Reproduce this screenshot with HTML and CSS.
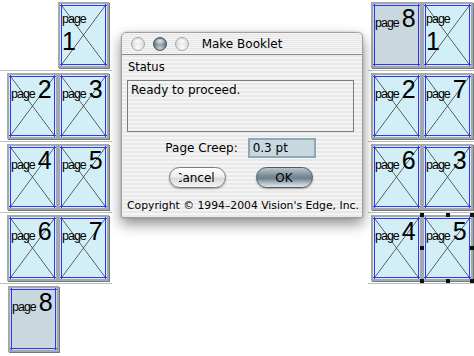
FILE: index.html
```html
<!DOCTYPE html>
<html lang="en">
<head>
  <meta charset="UTF-8" />
  <title>Make Booklet</title>
  <link rel="stylesheet" href="styles.css">
</head>
<body>

  <div class="desk">
    <!-- Original page order -->
    <div class="column left">
      <div class="spread">
        <div class="slot"></div>
        <div class="page"><div class="tag stack"><span class="word">page</span><span class="num">1</span></div></div>
      </div>
      <div class="spread">
        <div class="page"><div class="tag"><span class="word">page</span><span class="num">2</span></div></div>
        <div class="page"><div class="tag"><span class="word">page</span><span class="num">3</span></div></div>
      </div>
      <div class="spread">
        <div class="page"><div class="tag"><span class="word">page</span><span class="num">4</span></div></div>
        <div class="page"><div class="tag"><span class="word">page</span><span class="num">5</span></div></div>
      </div>
      <div class="spread">
        <div class="page"><div class="tag"><span class="word">page</span><span class="num">6</span></div></div>
        <div class="page"><div class="tag"><span class="word">page</span><span class="num">7</span></div></div>
      </div>
      <div class="spread last">
        <div class="page blank"><div class="tag"><span class="word">page</span><span class="num">8</span></div></div>
      </div>
    </div>

    <!-- Booklet (imposed) order -->
    <div class="column right">
      <div class="spread">
        <div class="page blank"><div class="tag"><span class="word">page</span><span class="num">8</span></div></div>
        <div class="page"><div class="tag stack"><span class="word">page</span><span class="num">1</span></div></div>
      </div>
      <div class="spread">
        <div class="page"><div class="tag"><span class="word">page</span><span class="num">2</span></div></div>
        <div class="page"><div class="tag"><span class="word">page</span><span class="num">7</span></div></div>
      </div>
      <div class="spread">
        <div class="page"><div class="tag"><span class="word">page</span><span class="num">6</span></div></div>
        <div class="page"><div class="tag"><span class="word">page</span><span class="num">3</span></div></div>
      </div>
      <div class="spread">
        <div class="page"><div class="tag"><span class="word">page</span><span class="num">4</span></div></div>
        <div class="page selected">
          <div class="tag"><span class="word">page</span><span class="num">5</span></div>
          <span class="handle tl"></span><span class="handle tm"></span><span class="handle tr"></span>
          <span class="handle ml"></span><span class="handle mr"></span>
          <span class="handle bl"></span><span class="handle bm"></span><span class="handle br"></span>
        </div>
      </div>
    </div>
  </div>

  <!-- Dialog window -->
  <div class="dialog">
    <div class="titlebar">
      <div class="lights">
        <span class="light"></span>
        <span class="light active"></span>
        <span class="light"></span>
      </div>
      <div class="title">Make Booklet</div>
      <div></div>
    </div>
    <div class="content">
      <div class="status-label">Status</div>
      <div class="status-box">Ready to proceed.</div>
      <div class="creep-row">
        <span>Page Creep:</span>
        <span class="field">0.3 pt</span>
      </div>
      <div class="buttons">
        <div class="btn"><span class="clip"><span>Cancel</span></span></div>
        <div class="btn default">OK</div>
      </div>
      <div class="copyright">Copyright &copy; 1994&ndash;2004 Vision's Edge, Inc.</div>
    </div>
  </div>

</body>
</html>
```

FILE: styles.css
```css
/* General */
body {
  margin: 0;
  width: 474px;
  height: 356px;
  overflow: hidden;
  position: relative;
  background: #fff;
  font-family: "Liberation Sans", Arial, sans-serif;
  color: #000;
}

.desk {
  display: flex;
  justify-content: space-between;
}

.column.left {
  width: 112px;
}

.column.right {
  width: 106px;
}

/* Spreads */
.spread {
  display: flex;
  height: 66px;
  padding: 2px 0 2px 7px;
  border-bottom: 1px solid #bcbcbc;
}

.right .spread {
  padding-left: 3px;
}

.spread.last {
  border-bottom: none;
  padding-left: 8px;
}

.slot {
  width: 51px;
  flex: none;
}

/* Page thumbnails */
.page {
  position: relative;
  flex: none;
  width: 51px;
  height: 66px;
  box-sizing: border-box;
  border: 2px solid #a3a9ab;
  box-shadow: 1px 1px 0 #747a7c;
  background-color: #d2eef6;
  background-image:
    linear-gradient(to top right, transparent calc(50% - 0.7px), #4d4d4d 50%, transparent calc(50% + 0.7px)),
    linear-gradient(to bottom right, transparent calc(50% - 0.7px), #4d4d4d 50%, transparent calc(50% + 0.7px));
  background-size: calc(100% - 4px) calc(100% - 4px);
  background-position: center;
  background-repeat: no-repeat;
}

.page.blank {
  background-color: #c9d7df;
  background-image: none;
}

.page::before {
  content: "";
  position: absolute;
  top: 0;
  bottom: 0;
  left: 1px;
  right: 1px;
  border-left: 1px solid #3434f4;
  border-right: 1px solid #3434f4;
}

.page::after {
  content: "";
  position: absolute;
  top: 1px;
  bottom: 1px;
  left: 0;
  right: 0;
  border-top: 1px solid #3434f4;
  border-bottom: 1px solid #3434f4;
}

.tag {
  position: relative;
  z-index: 1;
  display: flex;
  align-items: baseline;
  gap: 3px;
  margin-top: 2px;
  padding-left: 2px;
}

.tag.stack {
  flex-direction: column;
  align-items: flex-start;
  gap: 3px;
  margin-top: 8px;
}

.word {
  font-size: 12.5px;
  line-height: 14px;
  letter-spacing: -1px;
}

.num {
  font-size: 25px;
  line-height: 24px;
}

/* Selection handles */
.handle {
  position: absolute;
  z-index: 2;
  width: 4px;
  height: 4px;
  background: #111;
}

.handle.tl { top: -4px; left: -4px; }
.handle.tm { top: -4px; left: 22px; }
.handle.tr { top: -4px; right: -3px; }
.handle.ml { top: 29px; left: -4px; }
.handle.mr { top: 29px; right: -3px; }
.handle.bl { bottom: -4px; left: -4px; }
.handle.bm { bottom: -4px; left: 22px; }
.handle.br { bottom: -4px; right: -3px; }

/* Dialog window */
.dialog {
  position: absolute;
  left: 121px;
  top: 32px;
  width: 242px;
  height: 186px;
  box-sizing: border-box;
  border: 1px solid #a0a0a0;
  border-radius: 5px 5px 0 0;
  background: repeating-linear-gradient(#f4f4f4 0 2px, #e8e8e8 2px 4px);
  box-shadow: 0 6px 14px rgba(0, 0, 0, 0.45), 0 0 2px rgba(0, 0, 0, 0.25);
  font-family: "DejaVu Sans", "Lucida Grande", sans-serif;
  font-size: 12px;
}

.titlebar {
  display: grid;
  grid-template-columns: 1fr auto 1fr;
  align-items: center;
  height: 21px;
  padding: 0 9px;
  border-bottom: 1px solid #8c8c8c;
  border-radius: 5px 5px 0 0;
  background: repeating-linear-gradient(#f7f7f7 0 1px, #e4e4e4 1px 2px);
}

.lights {
  display: flex;
  gap: 8px;
}

.light {
  width: 12px;
  height: 12px;
  border-radius: 50%;
  border: 1px solid #a8a8a8;
  background:
    radial-gradient(ellipse 60% 35% at 50% 25%, rgba(255, 255, 255, 0.95), rgba(255, 255, 255, 0) 100%),
    radial-gradient(circle at 50% 80%, #ffffff, #dadada 55%, #c2c2c2);
}

.light.active {
  border-color: #4a535a;
  background:
    radial-gradient(ellipse 60% 35% at 50% 25%, rgba(255, 255, 255, 0.9), rgba(255, 255, 255, 0) 100%),
    radial-gradient(circle at 50% 85%, #c6d0d7, #6a7780 55%, #3e4850);
}

.title {
  font-size: 12px;
}

.content {
  padding: 0 8px 0 5px;
}

.status-label {
  margin: 5px 0 0 1px;
  font-size: 11.5px;
  line-height: 15px;
}

.status-box {
  margin-top: 5px;
  height: 52px;
  box-sizing: border-box;
  padding: 2px 3px;
  border: 1px solid #7c7c7c;
  line-height: 15px;
}

.creep-row {
  display: flex;
  justify-content: center;
  align-items: center;
  gap: 10px;
  margin-top: 6px;
}

.field {
  width: 68px;
  height: 20px;
  box-sizing: border-box;
  padding: 0 3px;
  border: 2px solid #8ea8bb;
  background: #c7d8df;
  line-height: 16px;
}

.buttons {
  display: flex;
  justify-content: center;
  gap: 30px;
  margin-top: 9px;
}

.btn {
  display: flex;
  justify-content: center;
  align-items: center;
  width: 57px;
  height: 21px;
  box-sizing: border-box;
  border: 1px solid #7a7a7a;
  border-radius: 11px;
  background: linear-gradient(#ffffff 0%, #eeeeee 45%, #d9d9d9 55%, #f6f6f6 100%);
  box-shadow: 0 1px 2px rgba(0, 0, 0, 0.3);
}

.btn.default {
  border-color: #4f5a62;
  background: linear-gradient(#b9c5cc 0%, #7d8d97 40%, #71818b 55%, #b3c0c8 80%, #e2e9ed 100%);
}

.clip {
  width: 36px;
  overflow: hidden;
  white-space: nowrap;
}

.clip span {
  margin-left: -5px;
}

.copyright {
  margin-top: 10px;
  text-align: center;
  font-size: 10.8px;
  line-height: 15px;
  white-space: nowrap;
}
```
